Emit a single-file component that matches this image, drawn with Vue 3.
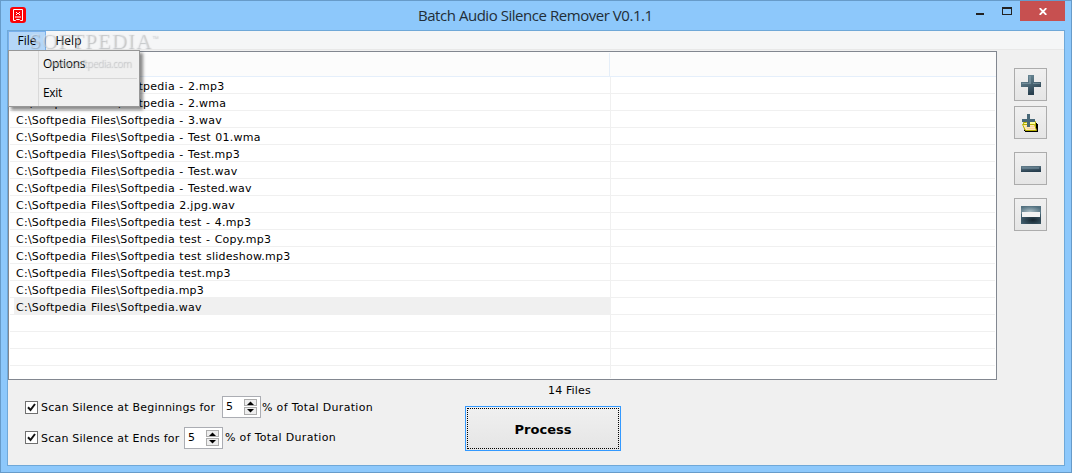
<template>
	<div class="window">
		<header class="title-bar">
			<svg class="app-icon" width="16" height="16" viewBox="0 0 16 16">
				<rect width="16" height="16" rx="3" fill="#fb0207" />
				<path d="M3.500 2.500h9v11h-2l-1-1h-3l-1 1h-2z" fill="none" stroke="#fff" />
				<path d="M6 5h1v1h2V5h1v1H9v1h1v1H9V7H7v1H6V7h1V6H6zM5 9.500h6v1H5z" fill="#fff" />
			</svg>
			<h1 class="title">Batch Audio Silence Remover V0.1.1</h1>
			<div class="window-controls">
				<button class="control minimize" aria-label="Minimize">
					<svg width="10" height="10" viewBox="0 0 10 10">
						<path d="M1 8h8v2h-8z" fill="#222" />
					</svg>
				</button>
				<button class="control maximize" aria-label="Maximize">
					<svg width="10" height="8" viewBox="0 0 10 8">
						<path d="M0 0h10v8H0zM1 2v5h8V2z" fill="#222" fill-rule="evenodd" />
					</svg>
				</button>
				<button class="control close" aria-label="Close">
					<svg width="8" height="7" viewBox="0 0 8 7">
						<path d="M.7 .2l6.600 6.600M7.300 .2L.7 6.800" stroke="#fff" stroke-width="1.900" />
					</svg>
				</button>
			</div>
		</header>

		<div class="client">
			<nav class="menu-bar">
				<button class="menu-item" :class="{ open: menuOpen }" @click="toggleMenu">File</button>
				<button class="menu-item help">Help</button>
				<div v-show="menuOpen" class="menu-popup">
					<div class="menu-option">Options</div>
					<div class="menu-separator"></div>
					<div class="menu-option exit">Exit</div>
				</div>
				<div class="watermark">
					<span class="brand">SOFTPEDIA</span><span class="tm">™</span>
					<span class="site">www.softpedia.com</span>
				</div>
			</nav>

			<div class="workspace">
				<div class="file-list">
					<div class="list-header">
						<div class="head-cell"></div>
					</div>
					<div
						v-for="(file, index) in rows"
						:key="index"
						class="row"
						:class="{ selected: file && file === selectedFile }"
						@click="selectedFile = file"
					>
						<div class="cell">{{ file }}</div>
					</div>
					<div class="row last"><div class="cell"></div></div>
				</div>

				<aside class="tools">
					<button class="tool" aria-label="Add files">
						<svg width="20" height="20" viewBox="0 0 20 20">
							<defs>
								<linearGradient id="steel" x1="0" y1="0" x2="0.4" y2="1">
									<stop offset="0" stop-color="#71909d" />
									<stop offset="0.5" stop-color="#506c7a" />
									<stop offset="1" stop-color="#273e4d" />
								</linearGradient>
							</defs>
							<path d="M7 0h6v7h7v5h-7v8H7v-8H0V7h7z" fill="url(#steel)" />
							<path d="M8 1h2v8H1V8h7zM12 8h7v1h-7z" fill="#8ca6b0" opacity=".55" />
						</svg>
					</button>
					<button class="tool folder" aria-label="Add folder">
						<svg width="17" height="18" viewBox="0 0 17 18">
							<path d="M3 9h12v1h1v8H3v-1H2v-2h1z" fill="#000" />
							<path d="M1.500 8.500h3v-1h9v8h-11z" fill="#ffffa0" stroke="#b0aa00" />
							<path d="M.5 10.500h12l2 6h-11z" fill="#fde9b4" stroke="#b8b000" />
							<path d="M4 12h8v1H4zM5 14h8v1H5z" fill="#fcd39a" />
							<path d="M5 0h3v5h5v3H8v5H5V8H0V5h5z" fill="#486878" />
						</svg>
					</button>
					<button class="tool" aria-label="Remove file">
						<svg class="minus" width="20" height="6" viewBox="0 0 20 6">
							<defs>
								<linearGradient id="bar" x1="0" y1="0" x2="0.3" y2="1">
									<stop offset="0" stop-color="#66818f" />
									<stop offset="1" stop-color="#263d4d" />
								</linearGradient>
							</defs>
							<rect width="20" height="6" fill="url(#bar)" />
							<path d="M1 1h17v2H1z" fill="#819caa" opacity=".45" />
						</svg>
					</button>
					<button class="tool" aria-label="Clear list">
						<svg width="20" height="18" viewBox="0 0 20 18">
							<defs>
								<radialGradient id="panelTop" cx=".45" cy=".6" r=".6">
									<stop offset="0" stop-color="#a6bac2" />
									<stop offset="1" stop-color="#52707f" />
								</radialGradient>
								<radialGradient id="panelBottom" cx=".6" cy=".6" r=".7">
									<stop offset="0" stop-color="#15252f" />
									<stop offset="1" stop-color="#456373" />
								</radialGradient>
							</defs>
							<rect width="20" height="9" fill="url(#panelTop)" />
							<rect y="8" width="20" height="10" fill="url(#panelBottom)" />
							<rect x="1" y="6" width="18" height="5" fill="#f2f2f2" />
						</svg>
					</button>
				</aside>
			</div>

			<footer class="bottom">
				<div class="settings">
					<div v-for="scan in scans" :key="scan.label" class="scan" :class="scan.kind">
						<button class="checkbox" :aria-label="scan.label" @click="scan.enabled = !scan.enabled">
							<svg v-show="scan.enabled" width="11" height="11" viewBox="0 0 11 11">
								<path d="M2 5.300L4.500 8 9 2" fill="none" stroke="#111" stroke-width="2" />
							</svg>
						</button>
						<span class="scan-label">{{ scan.label }}</span>
						<div class="spinner">
							<span class="value">{{ scan.value }}</span>
							<div class="arrows">
								<button class="arrow" aria-label="Increase" @click="scan.value++">
									<svg width="7" height="4" viewBox="0 0 7 4"><path d="M0 4L3.500 .5 7 4z" /></svg>
								</button>
								<button class="arrow" aria-label="Decrease" @click="scan.value--">
									<svg width="7" height="4" viewBox="0 0 7 4"><path d="M0 0L3.500 3.500 7 0z" /></svg>
								</button>
							</div>
						</div>
						<span class="percent">% of Total Duration</span>
					</div>
				</div>
				<div class="process-area">
					<div class="file-count">{{ files.length }} Files</div>
					<button class="process"><span>Process</span></button>
				</div>
			</footer>
		</div>
	</div>
</template>

<script setup>
	import { computed, reactive, ref } from "vue";

	const folder = "C:\\Softpedia Files\\";

	const files = [
		"Softpedia - 2.mp3",
		"Softpedia - 2.wma",
		"Softpedia - 3.wav",
		"Softpedia - Test 01.wma",
		"Softpedia - Test.mp3",
		"Softpedia - Test.wav",
		"Softpedia - Tested.wav",
		"Softpedia 2.jpg.wav",
		"Softpedia test - 4.mp3",
		"Softpedia test - Copy.mp3",
		"Softpedia test slideshow.mp3",
		"Softpedia test.mp3",
		"Softpedia.mp3",
		"Softpedia.wav",
	].map((name) => folder + name);

	// the grid keeps drawing empty rows below the last file
	const rows = computed(() => [...files, "", "", ""]);
	const selectedFile = ref(files[13]);

	const menuOpen = ref(true);
	const toggleMenu = () => {
		menuOpen.value = !menuOpen.value;
	};

	const scans = reactive([
		{ kind: "begin", label: "Scan Silence at Beginnings for", value: 5, enabled: true },
		{ kind: "end", label: "Scan Silence at Ends for", value: 5, enabled: true },
	]);
</script>

<style>
	body {
		margin: 0;
		overflow: hidden;
	}
</style>

<style scoped>
	.window {
		box-sizing: border-box;
		width: 1072px;
		height: 473px;
		padding: 0 6px 6px 6px;
		border: 1px solid #679bc9;
		background: #8dc8fb;
		color: #000;
		font-family: "DejaVu Sans", sans-serif;
		font-size: 11px;
		display: flex;
		flex-direction: column;
	}

	button {
		font: inherit;
		color: inherit;
		letter-spacing: inherit;
		padding: 0;
		margin: 0;
		border: none;
		border-radius: 0;
		background: none;
		box-sizing: border-box;
	}

	svg {
		display: block;
		flex-shrink: 0;
	}

	.title-bar {
		height: 29px;
		flex-shrink: 0;
		display: grid;
		grid-template-columns: 140px 1fr 101px;
	}

	.app-icon {
		margin: 6px 0 0 3px;
	}

	.title {
		margin: 4px 0 0 271px;
		font: 400 15px/21px "Open Sans", sans-serif;
		letter-spacing: -0.46px;
		color: #222e38;
		white-space: nowrap;
	}

	.window-controls {
		display: flex;
	}

	.control {
		height: 20px;
		display: flex;
		justify-content: center;
	}

	.minimize {
		width: 32px;
		padding-top: 4px;
	}

	.maximize {
		width: 22px;
		margin-right: 2px;
		padding-top: 6px;
	}

	.close {
		width: 45px;
		padding-top: 7px;
		background: #c75050;
	}

	.client {
		flex: 1;
		border: 1px solid #6fa8d8;
		background: #f0f0f0;
		display: flex;
		flex-direction: column;
		min-height: 0;
	}

	.menu-bar {
		position: relative;
		height: 18px;
		flex-shrink: 0;
		display: flex;
		background: #f5f6f7;
		border-bottom: 1px solid #e8e8e8;
		font: 12px/18px "Open Sans", sans-serif;
	}

	.menu-item {
		width: 38px;
		height: 19px;
		line-height: 18px;
		border: 1px solid transparent;
	}

	.menu-item.help {
		width: 45px;
	}

	.menu-item.open {
		background: #b5d7f8;
		border-color: #78b0ec;
		border-bottom: none;
	}

	.menu-popup {
		position: absolute;
		z-index: 2;
		top: 19px;
		left: 0;
		box-sizing: border-box;
		width: 132px;
		height: 57px;
		padding: 2px;
		border: 1px solid #979797;
		background: linear-gradient(90deg, #f0f0f0 29px, #d9d9d9 29px, #d9d9d9 30px, #f0f0f0 30px);
		box-shadow: 3px 3px 3px rgba(0, 0, 0, 0.45);
	}

	.menu-option {
		height: 24px;
		padding-left: 32px;
		line-height: 22px;
		letter-spacing: -0.3px;
	}

	.menu-option.exit {
		line-height: 23px;
	}

	.menu-separator {
		height: 1px;
		margin: 1px 0 2px 28px;
		background: #d7d7d7;
	}

	.watermark {
		position: absolute;
		z-index: 3;
		left: 21px;
		top: -2px;
		width: 135px;
		pointer-events: none;
		color: rgba(242, 243, 245, 0.35);
		text-shadow: 1px 1px 1px rgba(110, 115, 120, 0.4);
		white-space: nowrap;
	}

	.brand {
		font: 400 21px/24px "Liberation Serif", serif;
		letter-spacing: 1.05px;
	}

	.tm {
		font-size: 8px;
		vertical-align: 7px;
	}

	.site {
		display: block;
		margin: 3px 0 0 18px;
		font: 10px/14px "Open Sans", sans-serif;
		letter-spacing: -0.5px;
	}

	.workspace {
		height: 329px;
		flex-shrink: 0;
		margin-top: 1px;
		display: flex;
	}

	.file-list {
		box-sizing: border-box;
		width: 989px;
		height: 329px;
		border: 1px solid #828790;
		background: #fff;
		overflow: hidden;
		letter-spacing: 0.26px;
		word-spacing: 0.7px;
	}

	.list-header {
		height: 23px;
		padding-top: 1px;
		background: #fcfcfc;
		border-bottom: 1px solid #e5effb;
	}

	.head-cell {
		box-sizing: border-box;
		width: 601px;
		height: 23px;
		border-right: 1px solid #e5eef8;
	}

	.row {
		box-sizing: border-box;
		height: 17px;
		margin: 0 1px;
		border-bottom: 1px solid #f0f0f0;
	}

	.cell {
		box-sizing: border-box;
		width: 601px;
		height: 100%;
		padding-left: 6px;
		border-right: 1px solid #f0f0f0;
		line-height: 19px;
		white-space: nowrap;
	}

	.row.selected .cell {
		background: linear-gradient(90deg, #fff 4px, #f0f0f0 4px);
	}

	.row.last {
		height: 12px;
		border-bottom: none;
	}

	.tools {
		padding: 17px 0 0 17px;
		display: flex;
		flex-direction: column;
	}

	.tool {
		width: 33px;
		height: 33px;
		margin-bottom: 13px;
		border: 1px solid #acacac;
		background: linear-gradient(#f0f0f0, #e5e5e5);
		display: flex;
		align-items: center;
		justify-content: center;
	}

	.tool:first-child {
		margin-bottom: 5px;
	}

	.tool.folder {
		padding-right: 1px;
	}

	.minus {
		margin-top: 1px;
	}

	.bottom {
		flex: 1;
		display: flex;
		min-height: 0;
	}

	.settings {
		width: 457px;
		padding: 16px 0 0 17px;
		box-sizing: border-box;
		flex-shrink: 0;
	}

	.scan {
		height: 22px;
		margin-bottom: 9px;
		display: flex;
		align-items: center;
		white-space: nowrap;
	}

	.checkbox {
		width: 13px;
		height: 13px;
		border: 1px solid #707070;
		background: #fff;
		flex-shrink: 0;
	}

	.end .checkbox {
		margin-bottom: 1px;
	}

	.scan-label {
		box-sizing: border-box;
		width: 184px;
		padding-left: 3px;
		letter-spacing: 0.22px;
	}

	.end .scan-label {
		width: 146px;
	}

	.spinner {
		box-sizing: border-box;
		width: 39px;
		height: 22px;
		padding: 2px 3px;
		border: 1px solid #abadb3;
		background: #fff;
		display: flex;
		justify-content: space-between;
	}

	.value {
		line-height: 15px;
	}

	.arrows {
		display: flex;
		flex-direction: column;
		gap: 1px;
	}

	.arrow {
		width: 13px;
		height: 7px;
		border: 1px solid #acacac;
		background: #eee;
		display: flex;
		align-items: center;
		justify-content: center;
	}

	.arrow + .arrow {
		height: 8px;
	}

	.percent {
		padding-left: 1px;
		letter-spacing: 0.32px;
	}

	.end .percent {
		padding: 0 0 2px 2px;
	}

	.process-area {
		width: 156px;
	}

	.file-count {
		height: 26px;
		line-height: 22px;
		padding-left: 83px;
		letter-spacing: 0.15px;
		white-space: nowrap;
	}

	.process {
		width: 156px;
		height: 45px;
		padding: 1px;
		border: 1px solid #3399ff;
		background: linear-gradient(#f0f0f0, #e5e5e5);
		font-size: 13px;
		font-weight: 700;
	}

	.process span {
		display: flex;
		align-items: center;
		justify-content: center;
		height: 100%;
		box-sizing: border-box;
		padding-top: 1px;
		border: 1px dotted #000;
	}
</style>
